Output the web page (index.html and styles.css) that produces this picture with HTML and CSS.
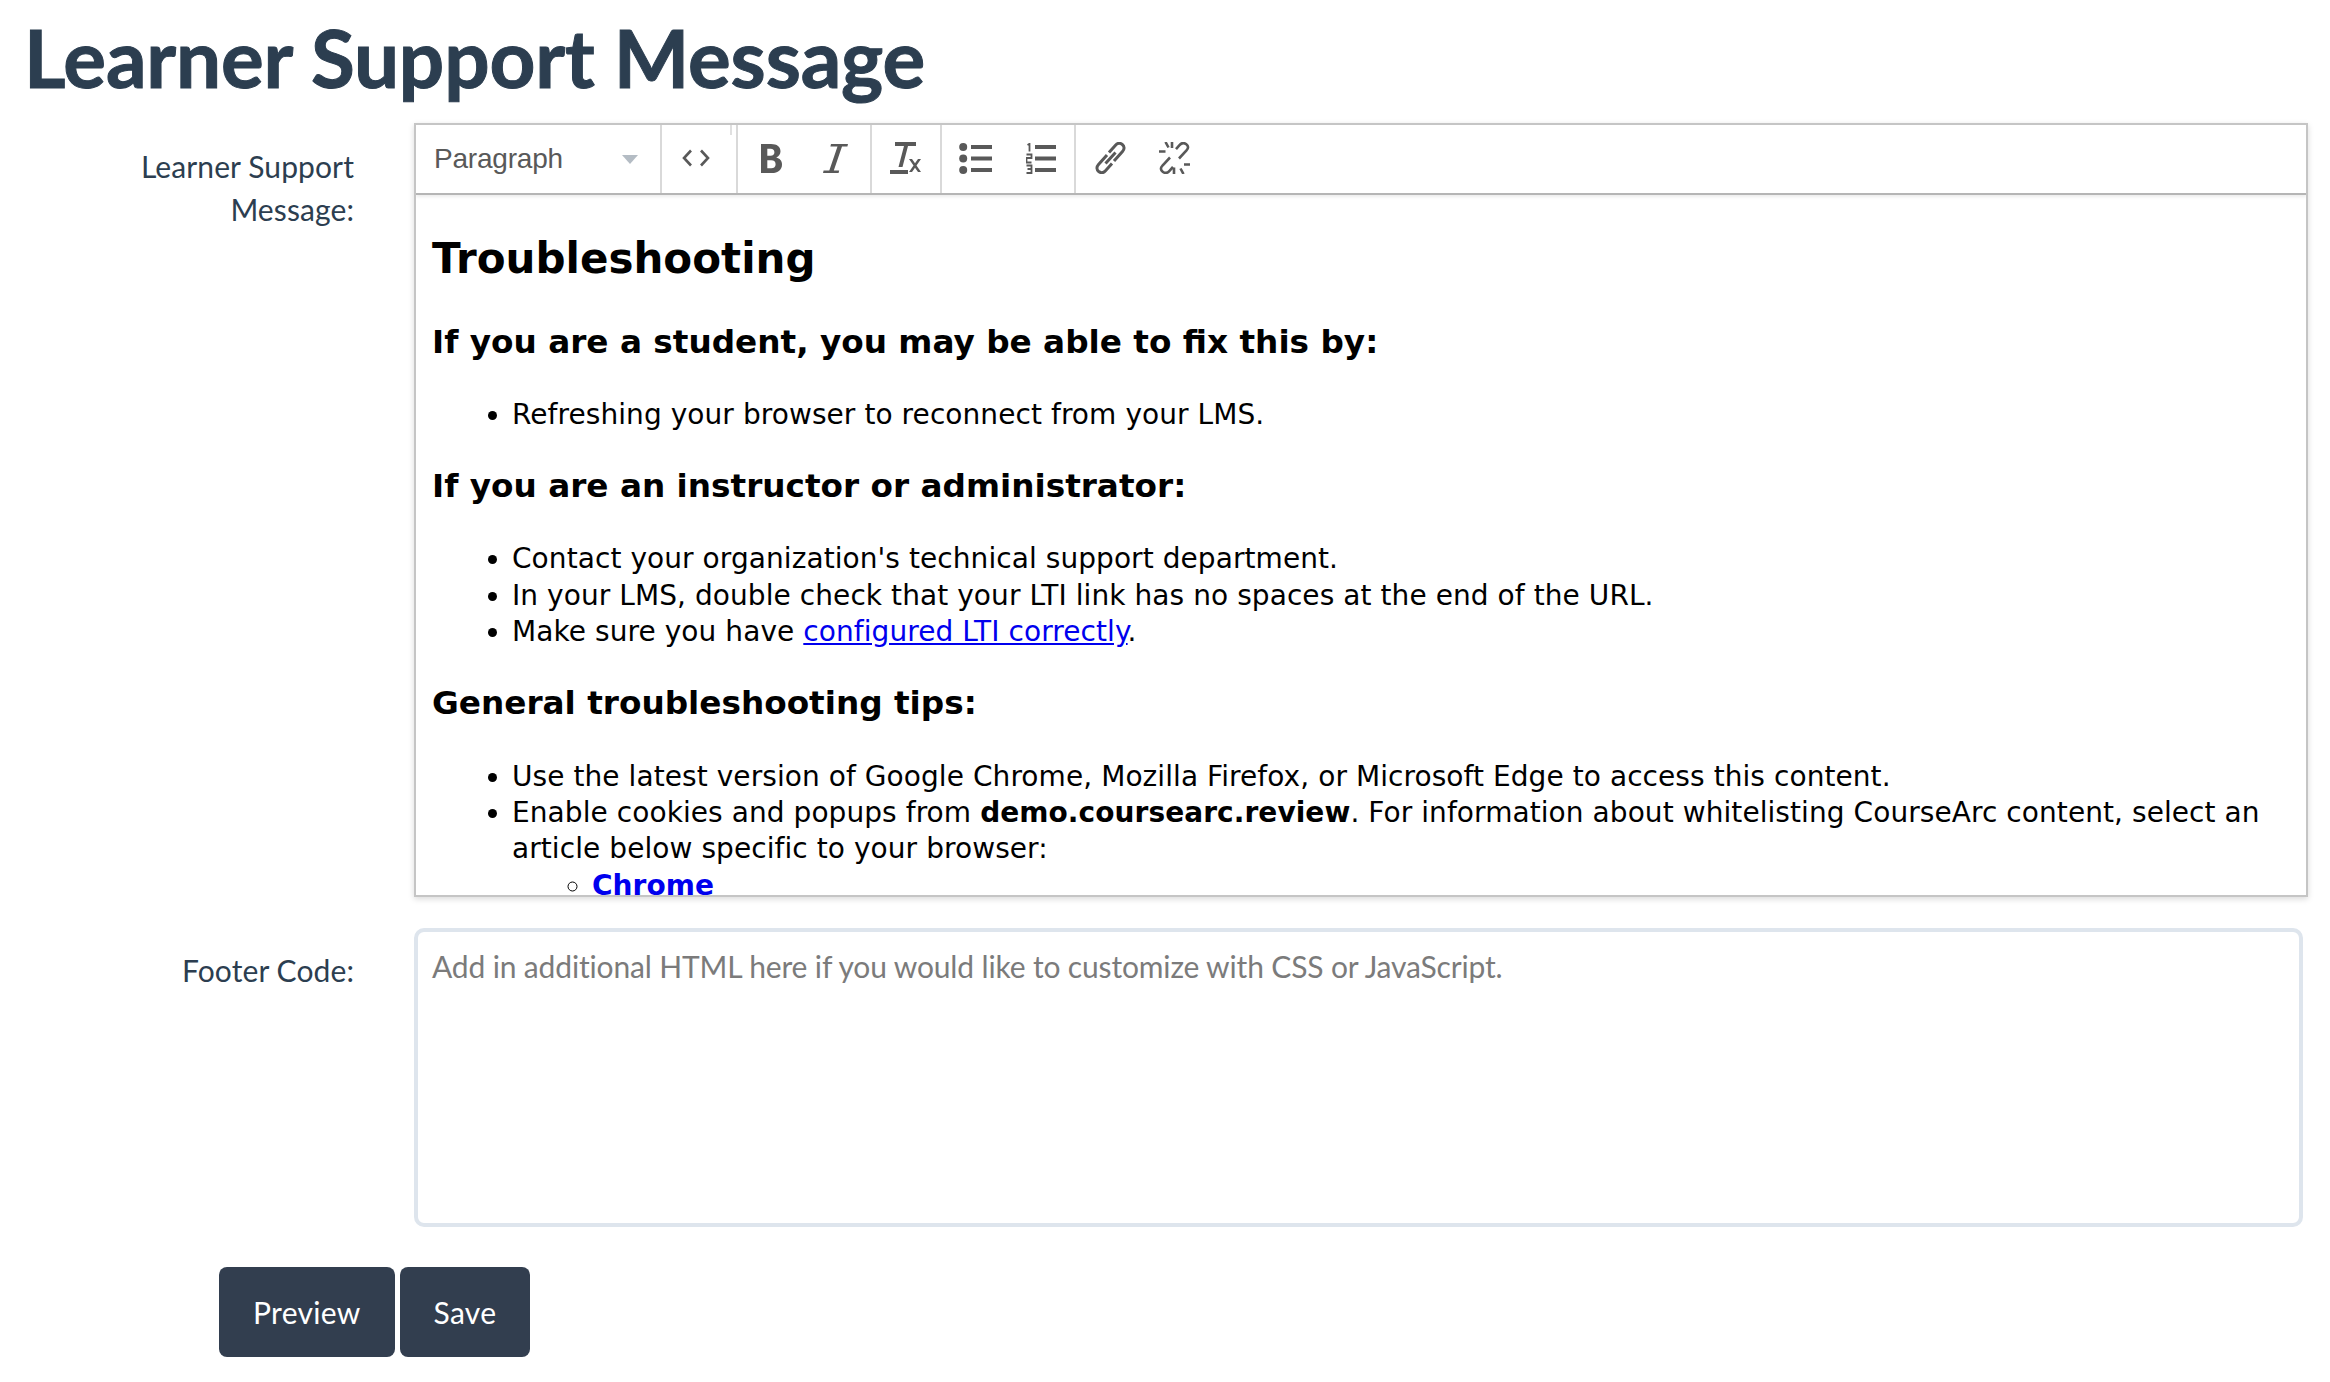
FILE: index.html
```html
<!DOCTYPE html>
<html lang="en">
<head>
<meta charset="utf-8">
<title>Learner Support Message</title>
<link rel="stylesheet" href="styles.css">
</head>
<body>
<h1 class="page-title">Learner Support Message</h1>
<form class="form">
  <div class="row row-editor">
    <label class="label">Learner Support Message:</label>
    <div class="editor">
      <div class="toolbar">
        <div class="group group-format">
          <span>Paragraph</span>
          <i class="caret"></i>
        </div>
        <div class="group group-code">
          <svg class="icon-code" viewBox="0 0 28 18"><path d="M9 1.500 2 9l7 7.500M19 1.500 26 9l-7 7.500" fill="none" stroke="#595959" stroke-width="2.600"/></svg>
          <i class="tick"></i>
        </div>
        <div class="group group-text">
          <svg class="icon-b" viewBox="0 0 21 29"><path d="M0 0h10c6 0 9.500 2.800 9.500 7.300 0 3-1.600 5.200-4.300 6.200 3.600.8 5.800 3.300 5.800 6.900C21 25.800 17 29 10.800 29H0zm6.300 4.800v7h3.200c2.600 0 3.900-1.200 3.900-3.500s-1.300-3.500-3.900-3.500zm0 11.500v7.900h3.900c2.900 0 4.400-1.300 4.400-3.900 0-2.700-1.500-4-4.400-4z" fill="#595959" fill-rule="evenodd"/></svg>
          <svg class="icon-i" viewBox="0 0 25 29"><path d="M8 0h17l-.6 2.400H19L10.800 26.600h5.400l-.6 2.400H0l.6-2.400h5.700L14.500 2.400H7.400z" fill="#595959"/></svg>
        </div>
        <div class="group group-clear">
          <svg class="icon-clear" viewBox="0 0 31 32"><path d="M5 0h21v4h-8L12.500 25h-4L14 4H5zM0 28h18v4H0zM19 17h3l3 4.300 3-4.300h3l-4.500 6.500L31 30h-3l-3-4.300-3 4.300h-3l4.500-6.500z" fill="#595959"/></svg>
        </div>
        <div class="group group-lists">
          <svg class="icon-list" viewBox="0 0 33 31"><g fill="#595959"><circle cx="4.200" cy="4" r="4"/><circle cx="4.200" cy="15.500" r="4"/><circle cx="4.200" cy="27" r="4"/><rect x="12" y="2" width="21" height="4"/><rect x="12" y="13.500" width="21" height="4"/><rect x="12" y="25" width="21" height="4"/></g></svg>
          <svg class="icon-num" viewBox="0 0 30 31"><g fill="#595959"><rect x="9" y="2" width="21" height="4"/><rect x="9" y="13.500" width="21" height="4"/><rect x="9" y="25" width="21" height="4"/></g><path d="M1.500 2 3.500.8v7.700M.5 11.500h5v3.500h-5v4.500h5M.5 22.500h5v3.500h-4 4v4h-5" fill="none" stroke="#595959" stroke-width="1.800"/></svg>
        </div>
        <div class="group group-links">
          <svg class="icon-link" viewBox="0 0 31 32"><path d="M10.500 21.500 20.500 10.500M12 13 3.500 22.500c-2.200 2.500-2 5.200.2 7 2.200 1.700 4.800 1.400 6.800-.8l6.500-7.200M19 19l8.500-9.500c2.200-2.500 2-5.200-.2-7-2.200-1.700-4.800-1.400-6.800.8L14 10.500" fill="none" stroke="#595959" stroke-width="3"/></svg>
          <svg class="icon-link" viewBox="0 0 31 32"><path d="M11 15.500 3.500 23.500c-2.200 2.500-2 4.500.2 6.200 2.200 1.700 4.800 1.400 6.800-.8l3.500-4M20 16.500 27.500 8.500c2.200-2.500 2-4.500-.2-6.200-2.200-1.700-4.800-1.400-6.800.8l-3.500 4M6.500 0l3 5.500M0 9.500h6.500M25 22.500h6M21.500 26.500l3 5.500M15 25.500V32M13 0v6" fill="none" stroke="#595959" stroke-width="2.600"/></svg>
        </div>
      </div>
      <div class="content">
        <h2>Troubleshooting</h2>
        <h3>If you are a student, you may be able to fix this by:</h3>
        <ul>
          <li>Refreshing your browser to reconnect from your LMS.</li>
        </ul>
        <h3>If you are an instructor or administrator:</h3>
        <ul>
          <li>Contact your organization's technical support department.</li>
          <li>In your LMS, double check that your LTI link has no spaces at the end of the URL.</li>
          <li>Make sure you have <a href="#">configured LTI correctly</a>.</li>
        </ul>
        <h3>General troubleshooting tips:</h3>
        <ul>
          <li>Use the latest version of Google Chrome, Mozilla Firefox, or Microsoft Edge to access this content.</li>
          <li>Enable cookies and popups from <strong>demo.coursearc.review</strong>. For information about whitelisting CourseArc content, select an article below specific to your browser:
            <ul>
              <li><a href="#"><strong>Chrome</strong></a></li>
            </ul>
          </li>
        </ul>
      </div>
    </div>
  </div>
  <div class="row row-footer">
    <label class="label label-footer" for="footer-code">Footer Code:</label>
    <textarea class="code" id="footer-code" placeholder="Add in additional HTML here if you would like to customize with CSS or JavaScript."></textarea>
  </div>
  <div class="actions">
    <button type="button" class="btn">Preview</button>
    <button type="button" class="btn">Save</button>
  </div>
</form>
</body>
</html>
```
FILE: styles.css
```css
* { box-sizing: border-box; }
html, body { margin: 0; padding: 0; background: #fff; }
body { font-family: Lato, sans-serif; color: #2c3e50; height: 1382px; overflow: hidden; }

.page-title {
  margin: 0;
  padding: 12px 0 0 24px;
  height: 123px;
  font-size: 80px;
  line-height: 91px;
  font-weight: 700;
  color: #2c3e50;
  letter-spacing: -0.15px;
  -webkit-text-stroke: 1px #2c3e50;
}

.row { display: grid; grid-template-columns: 414px 1fr; }
.row-footer { margin-top: 31px; }

.label {
  font-size: 30px;
  line-height: 43px;
  text-align: right;
  padding: 22px 60px 0 120px;
  letter-spacing: 0.1px;
}
.label-footer { padding-top: 21px; }

.editor {
  width: 1894px;
  height: 774px;
  border: 2px solid #c5c5c5;
  box-shadow: 0 2px 6px rgba(0,0,0,0.15);
  display: flex;
  flex-direction: column;
  overflow: hidden;
}

.toolbar {
  height: 70px;
  flex: none;
  display: flex;
  border-bottom: 2px solid #b5b5b5;
  box-shadow: 0 2px 3px rgba(0,0,0,0.08);
}
.group {
  position: relative;
  display: flex;
  align-items: center;
  height: 100%;
  border-right: 2px solid #d9d9d9;
}
.group:last-child { border-right: 0; }
.group svg { flex: none; margin-top: -2px; }
.group-format { width: 246px; padding: 0 0 0 18px; font-family: "Liberation Sans", sans-serif; font-size: 28px; color: #595959; }
.group-format span { flex: 1; letter-spacing: -0.2px; }
.caret {
  width: 0; height: 0;
  margin-right: 22px;
  border-left: 8px solid transparent;
  border-right: 8px solid transparent;
  border-top: 9px solid #b4bcc4;
}
.group-code { width: 76px; padding-left: 20px; }
.tick { position: absolute; left: 68px; top: 0; width: 2px; height: 10px; background: #e0e0e0; }
.group-text { width: 134px; gap: 41px; padding-left: 23px; }
.group-clear { width: 70px; padding-left: 18px; }
.group-lists { width: 134px; gap: 34px; padding-left: 17px; }
.group-links { padding-left: 19px; gap: 33px; }
.icon-code { width: 28px; height: 18px; }
.icon-b { width: 21px; height: 29px; }
.icon-i { width: 25px; height: 29px; }
.icon-clear { width: 31px; height: 32px; }
.icon-list { width: 33px; height: 31px; }
.icon-num { width: 30px; height: 31px; }
.icon-link { width: 31px; height: 32px; }

.content {
  flex: 1;
  overflow: hidden;
  padding: 37px 16px 0;
  font-family: "DejaVu Sans", sans-serif;
  font-size: 28px;
  line-height: 36.4px;
  letter-spacing: 0.07px;
  color: #000;
}
.content h2 { font-size: 42px; line-height: 54.6px; margin: 0 0 34px; letter-spacing: 0; }
.content h3 { font-size: 32.7px; line-height: 42.6px; margin: 32px 0 33.5px; letter-spacing: 0; }
.content ul { margin: 32px 0; padding-left: 80px; }
.content ul ul { margin: 0; list-style-type: circle; }
.content a { color: #0000ee; }

.code {
  display: block;
  width: 1889px;
  height: 299px;
  padding: 13px 14px;
  border: 4px solid #dee5ed;
  border-radius: 10px;
  font-family: Lato, sans-serif;
  font-size: 30px;
  line-height: 43px;
  resize: none;
  outline: 0;
  letter-spacing: -0.15px;
}
.code::placeholder { color: #7b7b7b; opacity: 1; }

.actions { display: flex; gap: 5px; margin-top: 40px; padding-left: 219px; }
.btn {
  height: 90px;
  padding: 0 34px;
  border: 0;
  border-radius: 8px;
  background: #323e4f;
  color: #fff;
  font-family: Lato, sans-serif;
  font-size: 30px;
  letter-spacing: 0.3px;
}
```
